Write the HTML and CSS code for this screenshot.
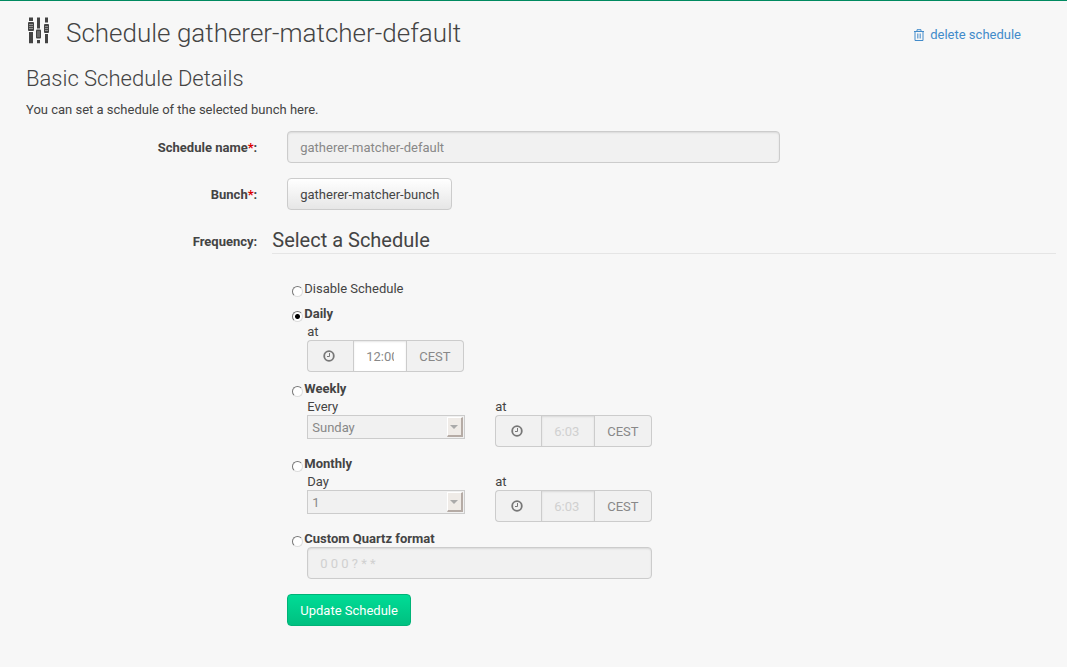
FILE: index.html
```html
<!DOCTYPE html>
<html lang="en">
<head>
<meta charset="utf-8">
<title>Schedule gatherer-matcher-default</title>
<link rel="stylesheet" href="styles.css">
</head>
<body>
<svg class="sprite" aria-hidden="true">
  <symbol id="clock" viewBox="0 0 12 12"><circle cx="6" cy="6" r="4.8" fill="none" stroke="currentColor" stroke-width="1.8"/><path d="M6.5 3v3.5H4" fill="none" stroke="currentColor"/></symbol>
</svg>
<main class="page">
  <header class="header">
    <h1 class="title">
      <svg class="title-icon" viewBox="0 0 24 28" aria-hidden="true">
        <path fill="#444" d="M3 1.5h4v3.5H3zM3 16h4v11.3H3zM11 1.5h3v11h-3zM11 24h3v3.3h-3zM19 1.5h3v5h-3zM19 18h3v9.3h-3z"/>
        <g fill="#444"><rect x="2" y="6" width="6" height="9" rx="1"/><rect x="10" y="13.5" width="5" height="9" rx="1"/><rect x="18" y="8" width="5" height="9" rx="1"/></g>
        <path d="M3 8.5h4M3 10.5h4M3 12.5h4M11 16h3M11 18h3M11 20h3M19 10.5h3M19 12.5h3M19 14.5h3" stroke="#999" stroke-width=".9"/>
      </svg>
      <span>Schedule gatherer-matcher-default</span>
    </h1>
    <a class="delete" href="#">
      <svg class="trash" viewBox="0 0 12 12" aria-hidden="true"><path d="M1 2.5h10M4 2V.7h4V2M2 3v8.5h8V3" fill="none" stroke="currentColor"/><path d="M4.5 4.5v5M6 4.5v5M7.5 4.5v5" fill="none" stroke="currentColor" stroke-width=".7"/></svg>
      delete schedule
    </a>
  </header>
  <h2 class="subtitle">Basic Schedule Details</h2>
  <p class="intro">You can set a schedule of the selected bunch here.</p>

  <form class="form">
    <div class="row">
      <label class="row-label" for="name">Schedule name<span class="required">*</span>:</label>
      <div class="row-body half"><input class="text" id="name" type="text" value="gatherer-matcher-default" disabled></div>
    </div>
    <div class="row">
      <label class="row-label" for="bunch">Bunch<span class="required">*</span>:</label>
      <div class="row-body"><button class="button" id="bunch" type="button">gatherer-matcher-bunch</button></div>
    </div>
    <div class="row">
      <span class="row-label">Frequency:</span>
      <fieldset class="frequency">
        <legend class="legend">Select a Schedule</legend>
        <div class="options">
          <div class="option compact">
            <label class="choice plain"><input class="radio" type="radio" name="freq">Disable Schedule</label>
          </div>
          <div class="option">
            <label class="choice"><input class="radio" type="radio" name="freq" checked>Daily</label>
            <div class="details">
              <div class="field">
                <label for="daily-at">at</label>
                <div class="group"><span class="addon clock-addon"><svg class="clock"><use href="#clock"/></svg></span><input class="time" id="daily-at" type="text" value="12:00"><span class="addon zone">CEST</span></div>
              </div>
            </div>
          </div>
          <div class="option">
            <label class="choice"><input class="radio" type="radio" name="freq">Weekly</label>
            <div class="details">
              <div class="field">
                <label for="weekday">Every</label>
                <div class="select-wrap"><select class="select" id="weekday" disabled><option>Sunday</option></select></div>
              </div>
              <div class="field">
                <label for="weekly-at">at</label>
                <div class="group"><span class="addon clock-addon"><svg class="clock"><use href="#clock"/></svg></span><input class="time" id="weekly-at" type="text" placeholder="6:03" disabled><span class="addon zone">CEST</span></div>
              </div>
            </div>
          </div>
          <div class="option">
            <label class="choice"><input class="radio" type="radio" name="freq">Monthly</label>
            <div class="details">
              <div class="field">
                <label for="day">Day</label>
                <div class="select-wrap"><select class="select" id="day" disabled><option>1</option></select></div>
              </div>
              <div class="field">
                <label for="monthly-at">at</label>
                <div class="group"><span class="addon clock-addon"><svg class="clock"><use href="#clock"/></svg></span><input class="time" id="monthly-at" type="text" placeholder="6:03" disabled><span class="addon zone">CEST</span></div>
              </div>
            </div>
          </div>
          <div class="option">
            <label class="choice"><input class="radio" type="radio" name="freq">Custom Quartz format</label>
            <div class="details custom"><input class="text" type="text" aria-label="Custom Quartz format" placeholder="0 0 0 ? * *" disabled></div>
          </div>
        </div>
        <button class="button primary" type="submit">Update Schedule</button>
      </fieldset>
    </div>
  </form>
</main>
</body>
</html>
```
FILE: styles.css
```css
*, *::before, *::after { box-sizing: border-box; }
body {
  margin: 0;
  border-top: 1px solid #008a60;
  background: #f7f7f7;
  color: #444;
  font: 13px/18px Roboto, sans-serif;
}
input, select, button { font: inherit; margin: 0; }
.sprite { display: none; }
.page { padding: 14px 11px 24px; }
.header {
  display: flex;
  justify-content: space-between;
  align-items: center;
  padding: 0 35px 0 15px;
}
.title {
  display: flex;
  gap: 16px;
  margin: 0;
  font-size: 26px;
  line-height: 36px;
  font-weight: 300;
}
.title-icon { width: 24px; height: 28px; margin-top: 1px; }
.delete {
  display: flex;
  align-items: center;
  gap: 5px;
  margin-top: 3px;
  color: #428bca;
  text-decoration: none;
}
.trash { width: 12px; height: 12px; }
.subtitle {
  margin: 14px 15px 8px;
  font-size: 22px;
  line-height: 28px;
  font-weight: 300;
}
.intro { margin: 0 15px 12px; }
.row {
  display: grid;
  grid-template-columns: 1fr 3fr;
  margin-bottom: 15px;
}
.row-label { padding: 8px 15px 0 0; text-align: right; font-weight: 700; }
.required { color: #d00; }
.row-body { padding: 0 15px; }
.half { width: 66.667%; }
.text {
  display: block;
  width: 100%;
  height: 32px;
  padding: 0 12px;
  border: 1px solid #ccc;
  border-radius: 4px;
  background: #f1f1f1;
  color: #888;
  box-shadow: inset 0 1px 2px rgba(0, 0, 0, .1);
}
.text::placeholder, .time::placeholder { color: #d0d0d0; opacity: 1; }
.button {
  height: 32px;
  padding: 2px 12px 0;
  border: 1px solid #ccc;
  border-radius: 4px;
  background: linear-gradient(#fff, #e6e6e6);
  color: #444;
}
.frequency { min-width: 0; margin: 0; padding: 0; border: 0; }
.legend {
  width: 100%;
  padding: 3px 0 1px;
  border-bottom: 1px solid #e5e5e5;
  font-size: 20px;
  line-height: 24px;
}
.options { padding: 26px 15px 0 20px; }
.option { margin-bottom: 8px; }
.compact { margin-bottom: 7px; }
.choice { display: flex; align-items: center; font-weight: 700; }
.plain { font-weight: 400; }
.radio {
  appearance: none;
  width: 11px;
  height: 11px;
  margin: 5px 1px 0 0;
  border: 1px solid;
  border-color: #777 #ddd #ddd #777;
  border-radius: 50%;
  background: #fff;
}
.radio:checked { background: radial-gradient(circle, #000 2px, #fff 3px); }
.details { display: flex; gap: 30px; padding-left: 15px; }
.field > label { display: block; }
.group, .select-wrap, .custom .text { margin-top: -1px; }
.group { display: flex; width: 157px; height: 32px; }
.addon {
  display: flex;
  align-items: center;
  border: 1px solid #ccc;
  background: #f1f1f1;
  color: #888;
}
.clock-addon {
  justify-content: center;
  flex: 0 0 46px;
  padding-right: 3px;
  border-right: 0;
  border-radius: 4px 0 0 4px;
}
.zone {
  flex: 0 0 57px;
  padding: 2px 12px 0;
  border-left: 0;
  border-radius: 0 4px 4px 0;
}
.clock { width: 12px; height: 12px; color: #777; }
.time {
  flex: 1;
  min-width: 0;
  padding: 2px 12px 0;
  border: 1px solid #ccc;
  background: #fff;
  color: #888;
  box-shadow: inset 0 1px 2px rgba(0, 0, 0, .1);
}
.time:disabled { background: #f1f1f1; }
.select-wrap { position: relative; width: 158px; }
.select-wrap::before {
  content: "";
  position: absolute;
  top: 2px;
  right: 2px;
  width: 16px;
  height: 20px;
  border: 1px solid;
  border-width: 1px 2px 2px 1px;
  border-color: #fff #b5aba5 #b5aba5 #fff;
  background: #efebe7;
  pointer-events: none;
}
.select-wrap::after {
  content: "";
  position: absolute;
  top: 10px;
  right: 7px;
  border: 4px solid transparent;
  border-top-color: #aaa;
  border-bottom: 0;
  pointer-events: none;
}
.select {
  appearance: none;
  display: block;
  width: 100%;
  height: 24px;
  padding: 2px 4px 0;
  border: 1px solid #ccc;
  border-radius: 0;
  background: #f1f1f1;
  color: #888;
  opacity: 1;
}
.custom { width: 360px; }
.primary {
  display: block;
  margin: 15px 0 0 15px;
  border-color: #00b377;
  background: linear-gradient(#00dc96, #00c080);
  color: #fff;
}
```
